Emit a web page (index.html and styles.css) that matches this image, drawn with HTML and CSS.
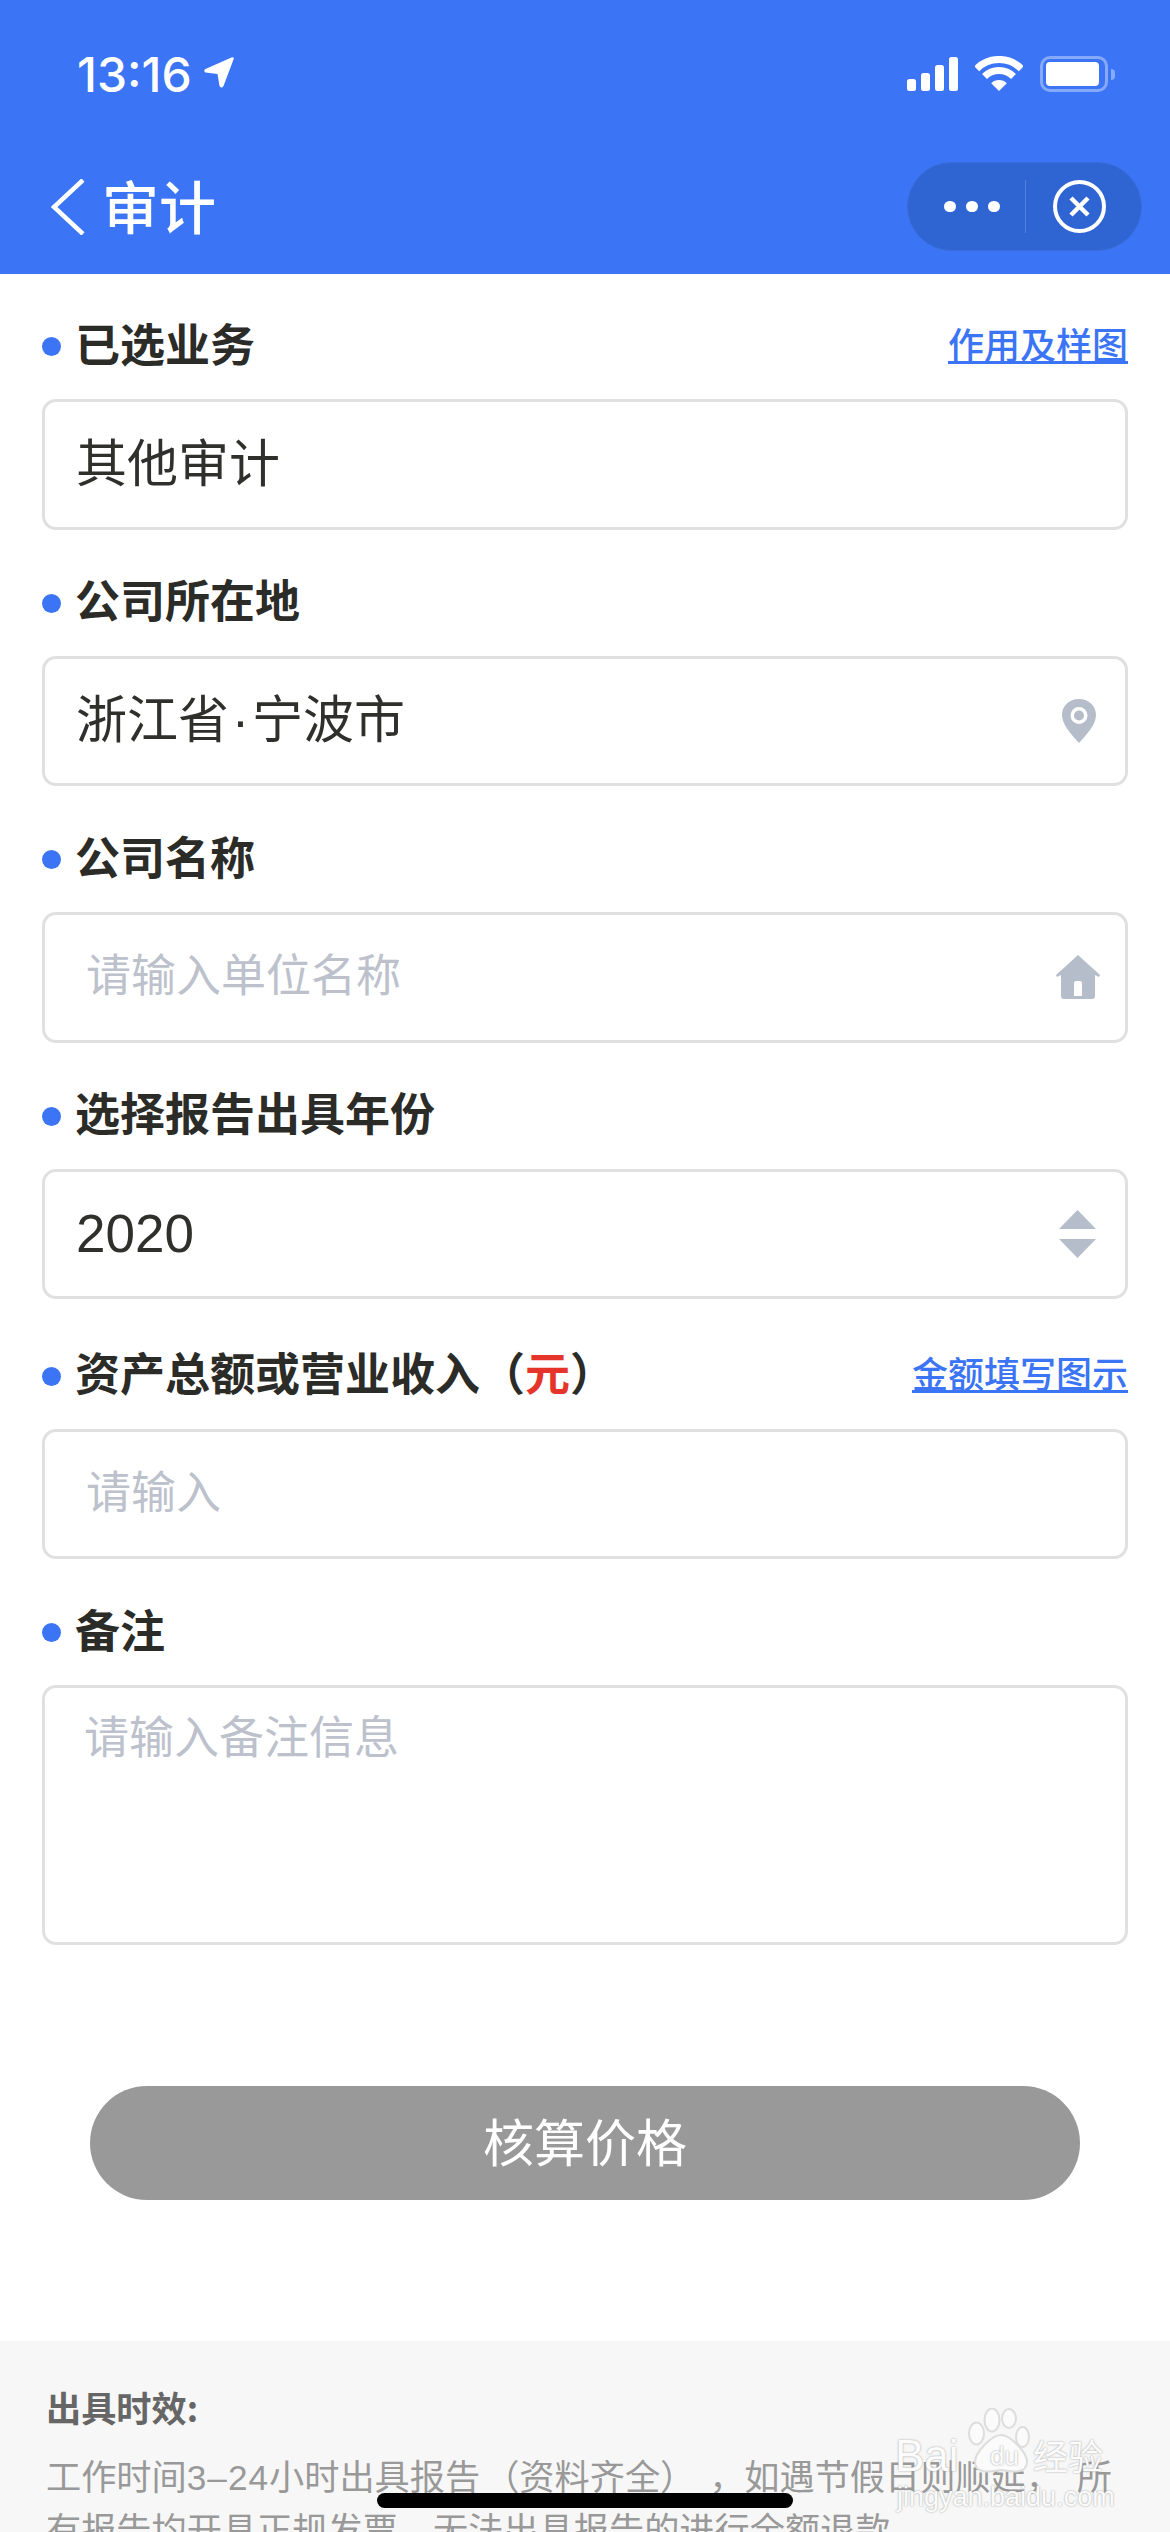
FILE: index.html
```html
<!DOCTYPE html>
<html lang="zh">
<head>
  <meta charset="utf-8">
  <title>审计</title>
  <link rel="stylesheet" href="styles.css">
</head>
<body>
<div id="page">

  <div id="header">
    <div id="status_bar">
      <div class="time">13:16
        <svg class="loc" width="30" height="31" viewBox="0 0 30 31"><path d="M27.500 0.500 Q30.500 -0.500 29.500 2.500 L19.500 29 Q17.500 32 15.500 29 L13.500 17 L1.500 15.500 Q-1 13.500 1.500 12 Z" fill="#fff"/></svg>
      </div>
      <div class="status_icons">
        <svg width="51" height="34" viewBox="0 0 51 34" fill="#fff">
          <rect x="0" y="22" width="9" height="12" rx="2.500"/>
          <rect x="14" y="16" width="9" height="18" rx="2.500"/>
          <rect x="28" y="8" width="9" height="26" rx="2.500"/>
          <rect x="42" y="0" width="9" height="34" rx="2.500"/>
        </svg>
        <svg width="48" height="36" viewBox="0 0 48 36">
          <path d="M24 35 L16.200 27.200 A11 11 0 0 1 31.800 27.200 Z" fill="#fff"/>
          <path d="M9.500 20.500 A20.500 20.500 0 0 1 38.500 20.500" fill="none" stroke="#fff" stroke-width="7"/>
          <path d="M1.700 12.700 A31.500 31.500 0 0 1 46.300 12.700" fill="none" stroke="#fff" stroke-width="7"/>
        </svg>
        <div class="battery"><div class="battery_fill"></div></div>
        <div class="battery_cap"></div>
      </div>
    </div>
    <div id="nav_bar">
      <svg class="back" width="34" height="56" viewBox="0 0 34 56"><path d="M32 1 L3 28 L32 55" fill="none" stroke="#fff" stroke-width="4.500"/></svg>
      <div class="nav_title">审计</div>
      <div class="capsule">
        <div class="dots"><span></span><span></span><span></span></div>
        <div class="capsule_line"></div>
        <svg width="53" height="53" viewBox="0 0 53 53" fill="none" stroke="#fff">
          <circle cx="26.500" cy="26.500" r="24.500" stroke-width="4"/>
          <path d="M18 18 L35 35 M35 18 L18 35" stroke-width="4.500"/>
        </svg>
      </div>
    </div>
  </div>

  <div id="form">
    <div class="field">
      <div class="label_row">
        <div class="label"><i class="dot"></i>已选业务</div>
        <a class="help_link">作用及样图</a>
      </div>
      <div class="box value"><span class="box_text">其他审计</span></div>
    </div>

    <div class="field">
      <div class="label_row">
        <div class="label"><i class="dot"></i>公司所在地</div>
      </div>
      <div class="box value"><span class="box_text">浙江省<span class="mid_dot">·</span>宁波市</span>
        <svg class="box_icon" width="34" height="44" viewBox="0 0 34 44">
          <path fill-rule="evenodd" fill="#b6bdca" d="M17 0 C27 0 34 7 34 16 C34 26 24 36 17 44 C10 36 0 26 0 16 C0 7 7 0 17 0 Z M17 8 A8.500 8.500 0 1 0 17 25 A8.500 8.500 0 1 0 17 8 Z"/>
          <circle cx="17" cy="16.500" r="5" fill="#b6bdca"/>
        </svg>
      </div>
    </div>

    <div class="field">
      <div class="label_row">
        <div class="label"><i class="dot"></i>公司名称</div>
      </div>
      <div class="box holder"><span class="box_text">请输入单位名称</span>
        <svg class="box_icon" width="44" height="44" viewBox="0 0 44 44">
          <path fill-rule="evenodd" fill="#b6bdca" d="M22 0 L44 20 L43 22 L39 20 L39 41 Q39 44 36 44 L8 44 Q5 44 5 41 L5 20 L1 22 L0 20 Z M18 41 L26 41 L26 28 Q26 26 24 26 L20 26 Q18 26 18 28 Z"/>
        </svg>
      </div>
    </div>

    <div class="field">
      <div class="label_row">
        <div class="label"><i class="dot"></i>选择报告出具年份</div>
      </div>
      <div class="box value value_num"><span>2020</span>
        <svg class="box_icon" width="37" height="48" viewBox="0 0 37 48" fill="#b6bdca">
          <path d="M18.500 0 L37 19 L0 19 Z"/>
          <path d="M0 29 L37 29 L18.500 48 Z"/>
        </svg>
      </div>
    </div>

    <div class="field field_wide">
      <div class="label_row">
        <div class="label"><i class="dot"></i>资产总额或营业收入（<em>元</em>）</div>
        <a class="help_link">金额填写图示</a>
      </div>
      <div class="box holder"><span class="box_text">请输入</span></div>
    </div>

    <div class="field">
      <div class="label_row">
        <div class="label"><i class="dot"></i>备注</div>
      </div>
      <div class="box holder box_area">请输入备注信息</div>
    </div>
  </div>

  <div id="submit_wrapper">
    <div class="submit">核算价格</div>
  </div>

  <div id="notes">
    <h4>出具时效:</h4>
    <p>工作时间<span class="num">3–24</span>小时出具报告<span class="paren">（资料齐全）</span><span class="comma">，</span>如遇节假日则顺延<span class="comma comma_wide">，</span>所有报告均开具正规发票，无法出具报告的进行全额退款</p>
  </div>

  <div id="home_bar"></div>

  <div id="watermark">
    <svg class="paw" width="62" height="66" viewBox="0 0 62 66" fill="#fbfbfb" stroke="#ddd" stroke-width="2">
      <ellipse cx="8.500" cy="25.500" rx="7.500" ry="11"/>
      <ellipse cx="24" cy="12" rx="7.500" ry="11.500"/>
      <ellipse cx="41" cy="10.500" rx="7" ry="9.500"/>
      <ellipse cx="54.500" cy="29" rx="6.500" ry="10"/>
      <path d="M33 27 C42 27 59 44 59 54 C59 66 44 64 33 62 C22 64 7 66 7 54 C7 44 24 27 33 27 Z"/>
    </svg>
    <div class="wm_main">Bai</div>
    <div class="wm_du">du</div>
    <div class="wm_cn">经验</div>
    <div class="wm_url">jingyan.baidu.com</div>
  </div>

</div>
</body>
</html>
```
FILE: styles.css
```css
body {
  margin: 0;
  background: #fff;
  font-family: "Noto Sans CJK SC", "Liberation Sans", sans-serif;
  text-spacing-trim: space-all;
  font-feature-settings: "chws" 0, "palt" 0;
  font-kerning: none;
}
#page {
  position: relative;
  width: 1170px;
  height: 2532px;
  overflow: hidden;
}

#header {
  height: 274px;
  background: #3b75f6;
  color: #fff;
}
#status_bar {
  display: flex;
  justify-content: space-between;
  align-items: center;
  height: 148px;
  padding: 0 55px 0 77px;
  box-sizing: border-box;
}
.time {
  display: flex;
  align-items: center;
  gap: 12px;
  font-family: Inter, "Liberation Sans", sans-serif;
  font-size: 48px;
  font-weight: 500;
}
.loc {
  margin-bottom: 3px;
}
.status_icons {
  display: flex;
  align-items: center;
}
.status_icons svg {
  margin-right: 17px;
}
.battery {
  width: 68px;
  height: 36px;
  box-sizing: border-box;
  padding: 3px 6px 3px 3px;
  border: 3px solid #86a9f9;
  border-radius: 10px;
}
.battery_fill {
  height: 100%;
  background: #fff;
  border-radius: 4px;
}
.battery_cap {
  width: 4px;
  height: 11px;
  margin-left: 3px;
  background: #86a9f9;
  border-radius: 0 5px 5px 0;
}
#nav_bar {
  display: flex;
  align-items: center;
  height: 89px;
  margin-top: 14px;
  padding: 0 28px 0 51px;
}
.nav_title {
  margin-left: 17px;
  padding-bottom: 5px;
  font-size: 57px;
  font-weight: 500;
}
.capsule {
  display: flex;
  align-items: center;
  width: 235px;
  height: 89px;
  margin-left: auto;
  box-sizing: border-box;
  padding-left: 36px;
  background: #2f65d3;
  border: 1px solid #3a6cd9;
  border-radius: 45px;
}
.dots {
  display: flex;
  gap: 10.500px;
}
.dots span {
  width: 11.500px;
  height: 11.500px;
  background: #fff;
  border-radius: 50%;
}
.capsule_line {
  width: 1px;
  height: 53px;
  margin: 0 27px 0 25px;
  background: rgba(255, 255, 255, 0.18);
}

#form {
  padding: 44px 42px 0 42px;
}
.field {
  margin-bottom: 45px;
}
.field_wide {
  margin-top: 48.500px;
}
.label_row {
  display: flex;
  justify-content: space-between;
  align-items: center;
  height: 54px;
  margin-bottom: 27px;
}
.label {
  display: flex;
  align-items: center;
  padding-bottom: 6px;
  font-size: 45px;
  font-weight: 700;
  color: #2b2b28;
}
.label em {
  font-style: normal;
  color: #e5352b;
}
.dot {
  width: 19px;
  height: 19px;
  margin: 9px 14px 0 0;
  background: #3b75f6;
  border-radius: 50%;
}
.help_link {
  padding-bottom: 5px;
  font-size: 36px;
  font-weight: 500;
  color: #3b75f6;
  text-decoration: underline;
}
.box {
  display: flex;
  justify-content: space-between;
  align-items: center;
  height: 130.500px;
  box-sizing: border-box;
  border: 3px solid #e0e0e0;
  border-radius: 14px;
}
.box_text {
  padding-bottom: 9px;
}
.value {
  padding: 0 29px 0 31px;
  font-size: 51px;
  color: #2f2f2c;
}
.value_num {
  font-family: "Liberation Sans", sans-serif;
  font-size: 53px;
}
.mid_dot {
  padding: 0 3px;
  font-family: "Liberation Sans", sans-serif;
}
.holder {
  padding: 0 25px 0 41px;
  font-size: 45px;
  color: #bcc1cc;
}
.box_area {
  align-items: flex-start;
  height: 260px;
  padding-top: 14px;
  padding-left: 39px;
}

#submit_wrapper {
  padding: 96px 90px 0 90px;
}
.submit {
  height: 114px;
  padding-bottom: 6px;
  box-sizing: border-box;
  background: #999;
  border-radius: 57px;
  font-size: 51px;
  line-height: 108px;
  text-align: center;
  color: #fff;
}

#notes {
  height: 191px;
  margin-top: 141px;
  padding: 42px 47px 0 46px;
  background: #f7f7f7;
  font-size: 35.200px;
  color: #999;
}
#notes h4 {
  margin: 0 0 19px 0;
  font-size: 35.200px;
  font-weight: 700;
  line-height: 48px;
  color: #666;
}
#notes p {
  margin: 0;
  line-height: 50px;
}
.num {
  font-family: "Liberation Sans", sans-serif;
  letter-spacing: 1px;
}
.paren {
  padding-left: 4px;
}
.comma {
  display: inline-block;
  width: 35px;
  margin-left: 14px;
}
.comma_wide {
  width: 51px;
  margin-left: 0;
}

#home_bar {
  position: absolute;
  left: 377px;
  top: 2493px;
  width: 416px;
  height: 15px;
  background: #000;
  border-radius: 8px;
}

#watermark {
  position: absolute;
  left: 893px;
  top: 2405px;
  width: 225px;
  height: 112px;
  color: #fbfbfb;
  text-shadow: 0 0 2px #999;
  font-family: "Liberation Sans", "Noto Sans CJK SC", sans-serif;
  white-space: nowrap;
}
.paw {
  position: absolute;
  left: 75px;
  top: 3px;
}
.wm_main {
  position: absolute;
  left: 2px;
  top: 26px;
  font-size: 44px;
  line-height: 50px;
}
.wm_du {
  position: absolute;
  left: 97px;
  top: 36px;
  font-size: 26px;
  line-height: 30px;
}
.wm_cn {
  position: absolute;
  left: 140px;
  top: 30px;
  font-family: "Noto Sans CJK SC", sans-serif;
  font-size: 35px;
  line-height: 40px;
}
.wm_url {
  position: absolute;
  left: 4px;
  top: 76px;
  font-size: 27px;
  line-height: 32px;
}
```
